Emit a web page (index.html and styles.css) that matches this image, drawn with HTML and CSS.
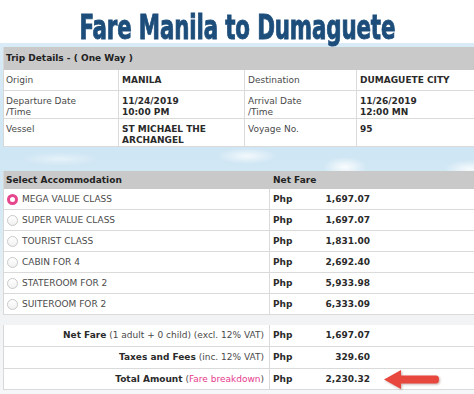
FILE: index.html
```html
<!DOCTYPE html>
<html lang="en">
<head>
<meta charset="utf-8">
<title>Fare Manila to Dumaguete</title>
<link rel="stylesheet" href="styles.css">
</head>
<body>
<header class="title"><h1>Fare Manila to Dumaguete</h1></header>
<main class="panel">
  <section class="trip">
    <div class="cell head span">Trip Details - ( One Way )</div>
    <div class="cell">Origin</div>
    <div class="cell val">MANILA</div>
    <div class="cell">Destination</div>
    <div class="cell val">DUMAGUETE CITY</div>
    <div class="cell">Departure Date<br>/Time</div>
    <div class="cell val">11/24/2019<br>10:00 PM</div>
    <div class="cell">Arrival Date<br>/Time</div>
    <div class="cell val">11/26/2019<br>12:00 MN</div>
    <div class="cell">Vessel</div>
    <div class="cell val">ST MICHAEL THE<br>ARCHANGEL</div>
    <div class="cell">Voyage No.</div>
    <div class="cell val">95</div>
  </section>

  <div class="sky"></div>

  <section class="accom">
    <div class="cell head">Select Accommodation</div>
    <div class="cell head">Net Fare</div>

    <div class="cell opt"><span class="radio on"></span>MEGA VALUE CLASS</div>
    <div class="cell fare"><span class="php">Php</span><span class="amt">1,697.07</span></div>
    <div class="cell opt"><span class="radio"></span>SUPER VALUE CLASS</div>
    <div class="cell fare"><span class="php">Php</span><span class="amt">1,697.07</span></div>
    <div class="cell opt"><span class="radio"></span>TOURIST CLASS</div>
    <div class="cell fare"><span class="php">Php</span><span class="amt">1,831.00</span></div>
    <div class="cell opt"><span class="radio"></span>CABIN FOR 4</div>
    <div class="cell fare"><span class="php">Php</span><span class="amt">2,692.40</span></div>
    <div class="cell opt"><span class="radio"></span>STATEROOM FOR 2</div>
    <div class="cell fare"><span class="php">Php</span><span class="amt">5,933.98</span></div>
    <div class="cell opt"><span class="radio"></span>SUITEROOM FOR 2</div>
    <div class="cell fare"><span class="php">Php</span><span class="amt">6,333.09</span></div>
  </section>

  <div class="spacer"></div>

  <section class="summary">
    <div class="cell label"><b>Net Fare</b>&nbsp;(1 adult + 0 child) (excl. 12% VAT)</div>
    <div class="cell fare"><span class="php">Php</span><span class="amt">1,697.07</span></div>
    <div class="cell label"><b>Taxes and Fees</b>&nbsp;(inc. 12% VAT)</div>
    <div class="cell fare"><span class="php">Php</span><span class="amt">329.60</span></div>
    <div class="cell label"><b>Total Amount</b>&nbsp;(<a class="link">Fare breakdown</a>)</div>
    <div class="cell fare"><span class="php">Php</span><span class="amt">2,230.32</span></div>
    <svg class="arrow" width="60" height="26" viewBox="0 0 60 26" aria-hidden="true">
      <path d="M2 12.5 L19 3 L19 8.5 L54 8.5 Q57 8.5 57 12.5 Q57 16.5 54 16.5 L19 16.5 L19 22 Z" fill="#e8473d"/>
    </svg>
  </section>
</main>
</body>
</html>
```

FILE: styles.css
```css
html, body {
  margin: 0;
  padding: 0;
  background: #ffffff;
}

body {
  width: 474px;
  height: 394px;
  overflow: hidden;
  font-family: "DejaVu Sans", Verdana, sans-serif;
  font-size: 9px;
  color: #4a4a4a;
}

.title {
  height: 43px;
  box-sizing: border-box;
  padding-top: 13px;
  display: flex;
  justify-content: center;
  background: #ffffff;
}

.title h1 {
  margin: 0;
  font-family: "DejaVu Sans Condensed", "DejaVu Sans", sans-serif;
  font-stretch: condensed;
  font-weight: bold;
  font-size: 33px;
  line-height: 30px;
  color: #1d4e7b;
  white-space: nowrap;
  transform: scaleX(0.72);
  transform-origin: center top;
  letter-spacing: -0.2px;
  -webkit-text-stroke: 0.9px #1d4e7b;
}

.panel {
  height: 351px;
  box-sizing: border-box;
  padding: 4px 0 0 3px;
  overflow: hidden;
  background:
    radial-gradient(ellipse 30px 8px at 247px 113px, rgba(255,255,255,0.75), rgba(255,255,255,0)),
    radial-gradient(ellipse 22px 10px at 345px 124px, rgba(255,255,255,0.9), rgba(255,255,255,0)),
    radial-gradient(ellipse 26px 9px at 470px 126px, rgba(255,255,255,0.85), rgba(255,255,255,0)),
    radial-gradient(ellipse 40px 7px at 60px 116px, rgba(255,255,255,0.45), rgba(255,255,255,0)),
    linear-gradient(to bottom, #d8ebf6 0, #cfe6f4 110px, #d6eaf4 180px, #e9f0f4 235px, #f1f3f4 275px, #f6f7f8 351px);
}

.trip, .accom, .summary {
  width: 480px;
  display: grid;
  background: #ffffff;
  border-left: 1px solid #d8d8d8;
}

.trip {
  grid-template-columns: 115px 126px 112px 1fr;
  grid-template-rows: 23px 21px 28px 28px;
}

.accom {
  grid-template-columns: 266px 1fr;
  grid-template-rows: 18px repeat(6, 21px);
}

.summary {
  position: relative;
  grid-template-columns: 266px 1fr;
  grid-template-rows: 22px 22px 21px;
}

.cell {
  box-sizing: border-box;
  border-right: 1px solid #dadada;
  border-bottom: 1px solid #dadada;
  padding: 5px 3px 0 3px;
  line-height: 11px;
  white-space: nowrap;
}

.head {
  background: #c9c9c9;
  color: #222222;
  font-weight: bold;
  border-right: none;
  border-bottom: none;
  display: flex;
  align-items: center;
  padding: 0 2px;
}

.accom .head:nth-child(2) {
  padding-left: 3px;
}

.span {
  grid-column: 1 / -1;
}

.val {
  font-weight: bold;
  color: #2a2a2a;
}

.trip .cell:nth-child(2),
.trip .cell:nth-child(6),
.trip .cell:nth-child(10) {
  padding-left: 2px;
}

.opt, .fare, .label {
  display: flex;
  align-items: center;
  padding-top: 0;
}

.opt {
  padding-left: 3px;
  color: #4a4a4a;
}

.radio {
  width: 11px;
  height: 11px;
  box-sizing: border-box;
  border-radius: 50%;
  border: 1px solid #c9c9c9;
  background: linear-gradient(#ffffff, #f1f1f1);
  margin-right: 4px;
  flex: none;
}

.radio.on {
  border: 3.5px solid #e5468c;
  background: #ffffff;
}

.fare {
  padding-left: 3px;
  border-right: none;
  color: #2a2a2a;
  font-weight: bold;
}

.php {
  width: 50px;
}

.amt {
  width: 47px;
  text-align: right;
}

.label {
  justify-content: flex-end;
  padding-right: 5px;
  color: #4a4a4a;
}

.label b {
  color: #2a2a2a;
}

.link {
  color: #e63a8c;
}

.sky {
  height: 24px;
}

.spacer {
  height: 10px;
}

.arrow {
  position: absolute;
  left: 378px;
  top: 42px;
  filter: drop-shadow(1px 1.5px 1px rgba(90, 30, 20, 0.35));
}
```
